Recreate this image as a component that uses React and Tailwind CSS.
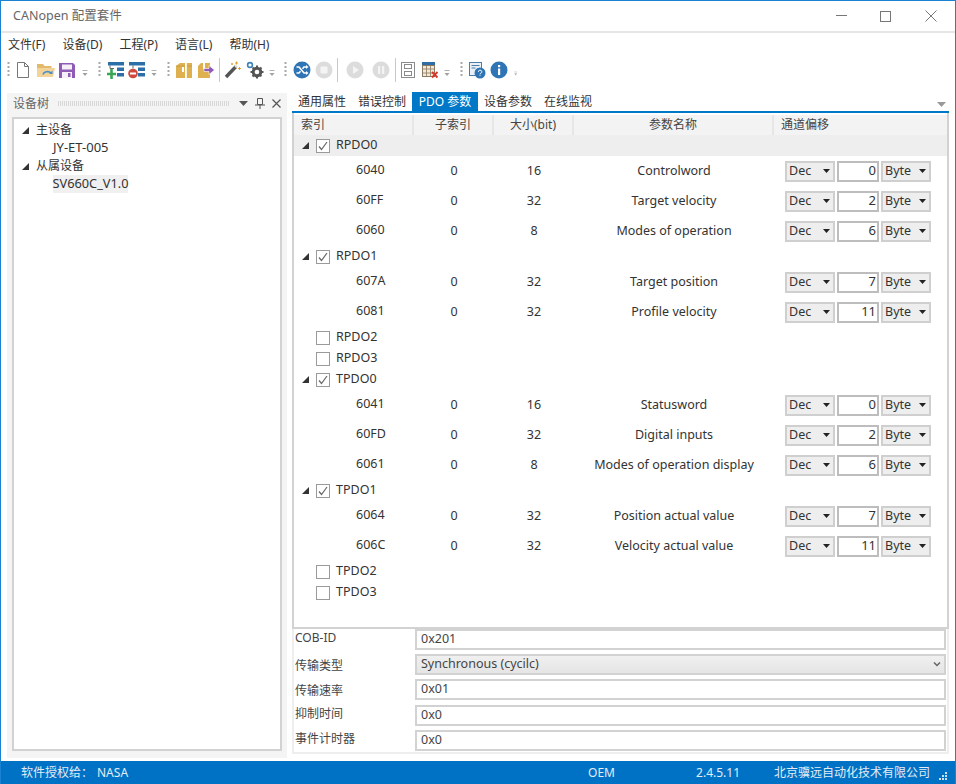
import React from "react";

const FONT = '"Noto Sans","Noto Sans CJK SC",sans-serif';

const Grip = ({ className }) => (
  <div className={"flex shrink-0 justify-center " + className}>
    <svg width="3" height="18" viewBox="0 0 3 18">
      {[1, 5, 9, 13].map((y) => (
        <rect key={y} x="0.5" y={y} width="2" height="2" fill="#a8a8a8" />
      ))}
    </svg>
  </div>
);
const Drop = ({ className }) => (
  <div className={"flex shrink-0 justify-center pt-[7px] " + className}>
    <svg width="7" height="8" viewBox="0 0 7 8">
      <rect x="0.5" y="0" width="5" height="1" fill="#b0b0b0" />
      <path d="M0.5 3h5l-2.5 3z" fill="#a0a0a0" />
    </svg>
  </div>
);
const Sep = ({ className }) => (
  <div className={"flex shrink-0 justify-center " + className}>
    <div className="h-[24px] w-px bg-[#c8c8c8]" />
  </div>
);
const Ic = ({ className, children }) => (
  <div className={"flex shrink-0 justify-center " + className}>
    <svg width="18" height="18" viewBox="0 0 18 18" className="shrink-0">
      {children}
    </svg>
  </div>
);

const Tri = ({ className = "" }) => (
  <svg width="7" height="7" viewBox="0 0 7 7" className={"shrink-0 " + className}>
    <path d="M7 0v7H0z" fill="#333" />
  </svg>
);

function Toolbar() {
  return (
    <div className="mt-[2px] flex h-[26px] items-center pl-[3px]">
      <Grip className="w-[8px]" />
      <Ic className="w-[22px]">
        <path d="M3.5 1.5h7l4 4v11h-11z" fill="#fff" stroke="#777" />
        <path d="M10.5 1.5v4h4" fill="none" stroke="#777" />
      </Ic>
      <Ic className="w-[24px]">
        <path d="M0 3h6l1.500 2h7v3H0z" fill="#e3b96b" />
        <path d="M0 16V7h18l-2 9z" fill="#f3d398" />
        <path d="M6 13.500a4.500 3.500 0 0 1 8-1.500" fill="none" stroke="#4a90c8" strokeWidth="1.6" />
        <path d="M15.500 9.500v3.500h-3.500z" fill="#4a90c8" />
      </Ic>
      <Ic className="w-[18px]">
        <path d="M1 2h14l2 2v13H1z" fill="#8e5bb5" />
        <rect x="4" y="3.500" width="10" height="5" fill="#f5f0f8" />
        <rect x="4" y="11" width="10" height="6" fill="#f5f0f8" />
        <rect x="10" y="12" width="2.500" height="4" fill="#8e5bb5" />
      </Ic>
      <Drop className="w-[18px]" />
      <Grip className="w-[10px]" />
      <Ic className="w-[24px]">
        <rect x="1" y="1" width="16" height="3.500" fill="#2b6ea8" />
        <rect x="10" y="6.500" width="7" height="3.500" fill="#2b6ea8" />
        <rect x="10" y="12" width="7" height="3.500" fill="#2b6ea8" />
        <path d="M3 4.500v3h4" fill="none" stroke="#666" />
        <path d="M4.500 8v10M0 13h9" stroke="#3aa655" strokeWidth="2.600" />
      </Ic>
      <Ic className="w-[18px]">
        <rect x="1" y="1" width="16" height="3.500" fill="#2b6ea8" />
        <rect x="10" y="6.500" width="7" height="3.500" fill="#2b6ea8" />
        <rect x="10" y="12" width="7" height="3.500" fill="#2b6ea8" />
        <path d="M5 4.500v3" fill="none" stroke="#666" />
        <circle cx="5" cy="12.500" r="4.800" fill="#d04a3c" />
        <rect x="2" y="11.500" width="6" height="2" fill="#fff" />
      </Ic>
      <Drop className="w-[16px]" />
      <Grip className="w-[12px]" />
      <Ic className="w-[20px]">
        <path d="M1 5l4-3h12v15H1z" fill="#deb050" />
        <path d="M1 5h16" stroke="#c99a3a" strokeWidth="0.800" />
        <rect x="10" y="2" width="1.800" height="15" fill="#fff" />
        <rect x="7" y="6" width="2" height="5" fill="#fff" />
      </Ic>
      <Ic className="w-[24px]">
        <path d="M1 5l3-3h9v15H1z" fill="#deb050" />
        <rect x="6" y="2" width="2" height="6" fill="#fff" />
        <path d="M7 7.500h5V4.500l5.500 4.500-5.500 4.500v-3H7z" fill="#8e5bb5" stroke="#fff" strokeWidth="0.600" />
      </Ic>
      <Sep className="w-[2px]" />
      <Ic className="w-[26px]">
        <path d="M2 16L12 5.500" stroke="#555" strokeWidth="3.400" />
        <path d="M11 4.500l2 2" stroke="#ddd" strokeWidth="2" />
        <path d="M12.500 0.500v3M11 2h3M15.500 6v3M14 7.500h3M8 2v2M7 3h2" stroke="#e0a030" strokeWidth="1" />
      </Ic>
      <Ic className="w-[18px]">
        <circle cx="11" cy="11" r="3.800" fill="none" stroke="#555" strokeWidth="3" />
        <path d="M11 4.500v2M11 15.500v2M4.500 11h2M15.500 11h2M6.500 6.500l1.400 1.400M14 14l1.400 1.400M15.500 6.500L14 8M8 14l-1.500 1.500" stroke="#555" strokeWidth="2" />
        <circle cx="4" cy="4" r="2.400" fill="none" stroke="#3f83bd" strokeWidth="1.600" />
      </Ic>
      <Drop className="w-[16px]" />
      <Grip className="w-[10px]" />
      <Ic className="w-[24px]">
        <circle cx="9" cy="9" r="8.500" fill="#2f74b5" />
        <path d="M3.500 6h2.500l5 6h2.500M3.500 12h2.500l1.500-1.800M9.500 7.800L11 6h2.500" fill="none" stroke="#fff" strokeWidth="1.500" />
        <path d="M13 4l2.500 2-2.500 2zM13 10l2.500 2-2.500 2z" fill="#fff" />
      </Ic>
      <Ic className="w-[20px]">
        <circle cx="9" cy="9" r="8.500" fill="#dcdcdc" />
        <rect x="5.500" y="5.500" width="7" height="7" rx="1" fill="#f4f4f4" />
      </Ic>
      <Sep className="w-[6px]" />
      <Ic className="w-[30px]">
        <circle cx="9" cy="9" r="8.500" fill="#dcdcdc" />
        <path d="M7 5l6 4-6 4z" fill="#f4f4f4" />
      </Ic>
      <Ic className="w-[22px]">
        <circle cx="9" cy="9" r="8.500" fill="#dcdcdc" />
        <rect x="6" y="5" width="2.200" height="8" fill="#f4f4f4" />
        <rect x="10" y="5" width="2.200" height="8" fill="#f4f4f4" />
      </Ic>
      <Sep className="w-[6px]" />
      <Ic className="w-[20px]">
        <rect x="2.500" y="1.500" width="13" height="15" fill="#fff" stroke="#8a8a8a" />
        <rect x="5.500" y="3.500" width="7" height="4" fill="#fff" stroke="#8a8a8a" />
        <rect x="5.500" y="10.500" width="7" height="4" fill="#fff" stroke="#8a8a8a" />
      </Ic>
      <Ic className="w-[24px]">
        <rect x="1" y="1" width="13" height="3" fill="#2f6ea5" />
        <rect x="1.500" y="4.500" width="12" height="11" fill="#f2ead8" stroke="#8a7a60" />
        <path d="M5.500 4.500v11M9.500 4.500v11M1.500 8h12M1.500 12h12" stroke="#8a7a60" strokeWidth="0.800" />
        <path d="M11 11l5.500 5.500M16.500 11L11 16.500" stroke="#d8352a" strokeWidth="1.800" />
      </Ic>
      <Drop className="w-[10px]" />
      <Grip className="w-[18px]" />
      <Ic className="w-[14px]">
        <rect x="1.500" y="1.500" width="12" height="13" fill="#eaf2f8" stroke="#4d7da5" />
        <path d="M3.500 4.500h8M3.500 7h4" stroke="#4d7da5" />
        <circle cx="12" cy="12" r="5.500" fill="#2f74b5" />
        <path d="M10.400 10.800a1.700 1.600 0 1 1 2.400 1.400l-.8.6v.6M12 14.300v.8" fill="none" stroke="#fff" strokeWidth="1" />
      </Ic>
      <Ic className="w-[30px]">
        <circle cx="9" cy="9" r="8.500" fill="#2f74b5" />
        <rect x="8" y="7.500" width="2.200" height="6.500" fill="#fff" />
        <rect x="8" y="4" width="2.200" height="2.200" fill="#fff" />
      </Ic>
      <Drop className="w-[4px]" />
    </div>
  );
}

const Select = ({ label, className = "" }) => (
  <div className={"flex h-[21px] w-[50px] shrink-0 items-center justify-between border-2 border-[#cfcfcf] bg-[#eeeeee] pl-[2px] pr-[3px] text-[12.5px] text-[#333] " + className}>
    <span>{label}</span>
    <svg width="7" height="4" viewBox="0 0 7 4"><path d="M0 0h7L3.500 4z" fill="#222" /></svg>
  </div>
);

const Check = ({ on }) => (
  <div className="flex h-[14px] w-[14px] shrink-0 items-center justify-center border border-[#9a9a9a] bg-white">
    {on && (
      <svg width="12" height="12" viewBox="0 0 12 12">
        <path d="M2 6.500l2.500 3L10 2" fill="none" stroke="#666" strokeWidth="1.200" />
      </svg>
    )}
  </div>
);

const Group = ({ name, on, expanded, shaded }) => (
  <div className={"flex h-[21px] items-center " + (shaded ? "bg-[#eeeeee]" : "")}>
    <div className="flex w-[22px] shrink-0 justify-end pr-[7px]">{expanded && <Tri />}</div>
    <Check on={on} />
    <span className="ml-[6px]">{name}</span>
  </div>
);

const Row = ({ idx, size, name, off }) => (
  <div className="flex h-[30px] items-center">
    <div className="w-[120px] shrink-0 pb-[1px] pl-[62px]">{idx}</div>
    <div className="w-[80px] shrink-0 text-center">0</div>
    <div className="w-[80px] shrink-0 text-center">{size}</div>
    <div className="w-[200px] shrink-0 text-center">{name}</div>
    <div className="flex items-center pl-[11px]">
      <Select label="Dec" />
      <div className="mx-[2px] flex h-[21px] w-[42px] shrink-0 items-center justify-end border-2 border-[#bdbdbd] bg-white pr-[1px] text-[13px] text-[#333]">{off}</div>
      <Select label="Byte" />
    </div>
  </div>
);

const Col = ({ w, children, center }) => (
  <div className={"flex h-full shrink-0 items-center border-r-2 border-[#e6e6e6] " + w + " " + (center ? "justify-center" : "pl-[7px]")}>{children}</div>
);

const Field = ({ label, value, labelClass, className = "" }) => (
  <div className={"flex items-start " + className}>
    <div className={"w-[121px] shrink-0 pl-[1px] text-[12px] text-[#444] " + labelClass}>{label}</div>
    <div className="flex h-[21px] w-[531px] items-center border-2 border-[#d2d2d2] bg-white pl-[4px] text-[#444]">{value}</div>
  </div>
);

const Tab = ({ children, active, w = "w-[60px]" }) => (
  <div className={"flex h-[20px] items-center justify-center whitespace-nowrap text-[12px] " + w + " " + (active ? "bg-[#0078c8] text-white" : "text-[#333]")}>{children}</div>
);

export default function App() {
  return (
    <div className="flex h-[784px] w-[956px] flex-col overflow-hidden border-x border-t border-[#1a82d0] bg-white text-[12.5px] text-[#333]" style={{ fontFamily: FONT }}>
      <div className="flex h-[32px] shrink-0 items-center justify-between border-b-2 border-[#e6e6e6]">
        <div className="pl-[12px] text-[12.5px] text-[#666]">CANopen 配置套件</div>
        <div className="flex items-center pr-[18px]">
          <svg width="11" height="2" viewBox="0 0 11 2"><rect width="11" height="1" fill="#777" /></svg>
          <svg width="11" height="11" viewBox="0 0 11 11" className="ml-[33px]"><rect x=".5" y=".5" width="10" height="10" fill="none" stroke="#777" /></svg>
          <svg width="12" height="12" viewBox="0 0 12 12" className="ml-[34px]"><path d="M.5.5l11 11M11.500.5l-11 11" stroke="#777" /></svg>
        </div>
      </div>
      <div className="flex h-[22px] shrink-0 items-center gap-[17px] pl-[7px] pt-[1px] text-[12px] text-[#333]">
        <span>文件(F)</span>
        <span>设备(D)</span>
        <span>工程(P)</span>
        <span>语言(L)</span>
        <span>帮助(H)</span>
      </div>
      <Toolbar />
      <div className="mt-[9px] flex min-h-0 flex-1 pl-[6px] pr-[6px]">
        <div className="mb-[3px] mt-[1px] flex w-[280px] shrink-0 flex-col bg-[#f4f4f4]">
          <div className="flex h-[21px] shrink-0 items-center pl-[6px] pr-[6px] text-[12px] text-[#666]">
            <span className="shrink-0">设备树</span>
            <div className="mx-[9px] h-[5px] flex-1 bg-[repeating-linear-gradient(90deg,#d8d8d8_0,#d8d8d8_1px,transparent_1px,transparent_2px)]" />
            <svg width="9" height="5" viewBox="0 0 9 5" className="mr-[7px]"><path d="M0 0h9L4.500 5z" fill="#555" /></svg>
            <svg width="10" height="11" viewBox="0 0 10 11" className="mr-[7px]"><path d="M2.500.5h5v6h-5zM0 7h10M5 7v4" fill="none" stroke="#555" /></svg>
            <svg width="9" height="9" viewBox="0 0 9 9"><path d="M.5.5l8 8M8.500.5l-8 8" stroke="#555" strokeWidth="1.200" /></svg>
          </div>
          <div className="mx-[5px] mb-[7px] mt-[3px] flex-1 border-2 border-[#d2d2d2] bg-white pt-[2px]">
            <div className="flex h-[18px] items-center pl-[8px] text-[12px]"><Tri /><span className="ml-[7px]">主设备</span></div>
            <div className="flex h-[17px] items-center pl-[39px] text-[13px]">JY-ET-005</div>
            <div className="mt-[1px] flex h-[18px] items-center pl-[8px] text-[12px]"><Tri /><span className="ml-[7px]">从属设备</span></div>
            <div className="ml-[39px] flex h-[18px] w-[75px] items-center justify-center whitespace-nowrap bg-[#f0f0f0] text-[12.75px]">SV660C_V1.0</div>
          </div>
        </div>
        <div className="ml-[5px] flex min-w-0 flex-1 flex-col pb-[7px]">
          <div className="flex h-[21px] shrink-0 items-start justify-between border-b-2 border-[#0078c8]">
            <div className="flex">
              <Tab>通用属性</Tab>
              <Tab>错误控制</Tab>
              <Tab active w="w-[66px]">PDO 参数</Tab>
              <Tab>设备参数</Tab>
              <Tab>在线监视</Tab>
            </div>
            <svg width="9" height="5" viewBox="0 0 9 5" className="mr-[3px] mt-[10px]"><path d="M0 0h9L4.500 5z" fill="#999" /></svg>
          </div>
          <div className="h-[516px] shrink-0 border-2 border-t-0 border-[#d2d2d2] bg-white">
            <div className="mt-[2px] flex h-[20px] items-center bg-[#f3f3f3] text-[12px] text-[#444]">
              <Col w="w-[120px]">索引</Col>
              <Col w="w-[80px]" center>子索引</Col>
              <Col w="w-[80px]" center>大小(bit)</Col>
              <Col w="w-[200px]" center>参数名称</Col>
              <div className="pl-[7px]">通道偏移</div>
            </div>
            <Group name="RPDO0" on expanded shaded />
            <Row idx="6040" size="16" name="Controlword" off="0" />
            <Row idx="60FF" size="32" name="Target velocity" off="2" />
            <Row idx="6060" size="8" name="Modes of operation" off="6" />
            <Group name="RPDO1" on expanded />
            <Row idx="607A" size="32" name="Target position" off="7" />
            <Row idx="6081" size="32" name="Profile velocity" off="11" />
            <Group name="RPDO2" />
            <Group name="RPDO3" />
            <Group name="TPDO0" on expanded />
            <Row idx="6041" size="16" name="Statusword" off="0" />
            <Row idx="60FD" size="32" name="Digital inputs" off="2" />
            <Row idx="6061" size="8" name="Modes of operation display" off="6" />
            <Group name="TPDO1" on expanded />
            <Row idx="6064" size="32" name="Position actual value" off="7" />
            <Row idx="606C" size="32" name="Velocity actual value" off="11" />
            <Group name="TPDO2" />
            <Group name="TPDO3" />
          </div>
          <div className="flex flex-1 flex-col border-x-2 border-b-2 border-[#eeeeee]">
            <Field label="COB-ID" value="0x201" labelClass="text-[12.5px]" />
            <div className="mt-[4px] flex items-start">
              <div className="w-[121px] shrink-0 pl-[1px] pt-[3px] text-[12px] text-[#444]">传输类型</div>
              <div className="flex h-[21px] w-[531px] items-center justify-between border-2 border-[#d2d2d2] bg-[linear-gradient(#f0f0f0,#e5e5e5)] pl-[4px] pr-[3px] text-[#444]">
                <span>Synchronous (cycilc)</span>
                <svg width="8" height="5" viewBox="0 0 8 5"><path d="M1 .5l3 3 3-3" fill="none" stroke="#666" strokeWidth="1.500" /></svg>
              </div>
            </div>
            <Field label="传输速率" value="0x01" labelClass="pt-[3px]" className="mt-[4px]" />
            <Field label="抑制时间" value="0x0" labelClass="" className="mt-[5px]" />
            <Field label="事件计时器" value="0x0" labelClass="" className="mt-[4px]" />
          </div>
        </div>
      </div>
      <div className="flex h-[23px] shrink-0 items-center bg-[#0072c6] text-[12px] text-[#e4edf5]">
        <span className="ml-[20px] w-[76px]">软件授权给：</span>
        <span>NASA</span>
        <span className="ml-[460px] w-[108px]">OEM</span>
        <span className="w-[78px]">2.4.5.11</span>
        <span>北京骥远自动化技术有限公司</span>
        <svg width="9" height="9" viewBox="0 0 9 9" className="ml-[8px] mt-[6px]">
          <path d="M7 1h2v2H7zM4 4h2v2H4zM7 4h2v2H7zM1 7h2v2H1zM4 7h2v2H4zM7 7h2v2H7z" fill="#cfe0ee" />
        </svg>
      </div>
    </div>
  );
}
